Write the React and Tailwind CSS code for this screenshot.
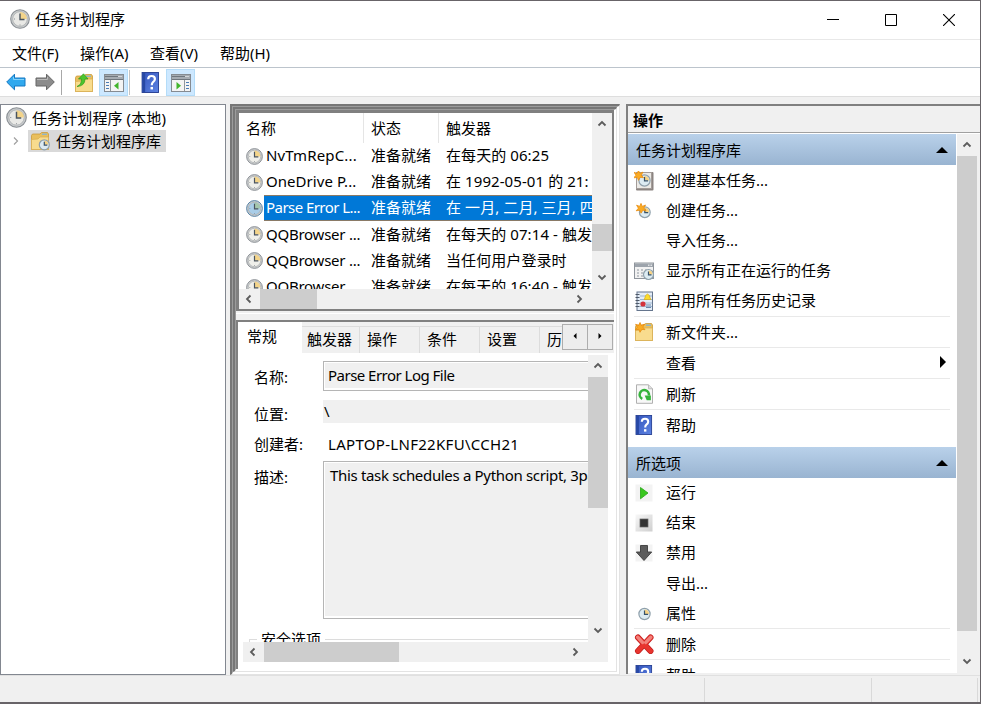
import React from "react";

const FONT = "font-['Noto_Sans','Noto_Sans_CJK_SC',sans-serif]";

function Clock({ size = 20, tint = "#e9e9e6", rim = "#8b9095", wedge = "#f3d48a", className = "" }) {
  return (
    <svg width={size} height={size} viewBox="0 0 20 20" className={"shrink-0 " + className}>
      <circle cx="10" cy="10" r="9.3" fill="#c9cccd" stroke={rim} strokeWidth="1.1" />
      <circle cx="10" cy="10" r="7.3" fill={tint} stroke="#a9adb0" strokeWidth="0.8" />
      <path d="M10 10V3a7 7 0 0 1 7 7z" fill={wedge} />
      <path d="M10 4.5V10.5H14.5" fill="none" stroke="#4a545e" strokeWidth="1.4" />
      <path d="M10 15.5v1M4 10h1" stroke="#8a8f94" strokeWidth="1" />
    </svg>
  );
}

function SmallClock({ x = 10, y = 10, r = 5.5 }) {
  return (
    <g>
      <circle cx={x} cy={y} r={r} fill="#dcebf2" stroke="#8fa0ab" strokeWidth="1.2" />
      <path d={`M${x} ${y}V${y - r + 1}A${r - 1} ${r - 1} 0 0 1 ${x + r - 1} ${y}z`} fill="#f6d284" />
      <path d={`M${x} ${y - r + 2}V${y + 0.4}H${x + r - 2}`} fill="none" stroke="#38536b" strokeWidth="1.2" />
    </g>
  );
}

function Star({ x = 5, y = 5 }) {
  return (
    <path
      transform={`translate(${x} ${y})`}
      d="M0 -5L1.3 -2L4.5 -3.4L2.8 -.4L5 2.2L1.8 1.8L0 4.8L-1.2 1.8L-4.8 2.4L-2.6 -.2L-4.4 -3.2L-1.3 -2z"
      fill="#fbab22"
      stroke="#e98d10"
      strokeWidth="0.8"
    />
  );
}

function FolderShape() {
  return (
    <g>
      <path d="M1.5 4.5L2.5 3H10l1.5-1.5h6L18.5 3v15.5h-17z" fill="#e9bf5d" stroke="#c99b3b" strokeWidth="0.8" />
      <path d="M12 3.2h5" stroke="#7db3df" strokeWidth="1.2" />
      <path d="M1.5 8.5L8 8l2-2h8.5v12.5h-17z" fill="#f8dc8e" stroke="#d9ae52" strokeWidth="0.7" />
    </g>
  );
}

function HelpBook({ size = 20 }) {
  return (
    <svg width={size} height={size} viewBox="0 0 20 20" className="shrink-0">
      <defs>
        <linearGradient id="hb" x1="0" y1="0" x2="1" y2="1">
          <stop offset="0" stopColor="#3455bd" />
          <stop offset="1" stopColor="#5d83e2" />
        </linearGradient>
      </defs>
      <rect x="2" y="0.5" width="15.6" height="19" fill="url(#hb)" stroke="#263f93" strokeWidth="0.9" />
      <rect x="2.3" y="1" width="2.6" height="18" fill="#2748a4" />
      <path d="M7.8 6.8Q7.8 3.8 11 3.8Q14.2 3.8 14.2 6.7Q14.2 8.4 12.4 9.6Q11.2 10.5 11.2 12.6" fill="none" stroke="#fff" strokeWidth="2.1" />
      <rect x="10" y="14.2" width="2.4" height="2.4" fill="#fff" />
    </svg>
  );
}

function PaneIcon({ flip }) {
  return (
    <svg width="20" height="18" viewBox="0 0 20 18" className="shrink-0">
      <rect x="0.5" y="0.5" width="19" height="17" fill="#f4f4f4" stroke="#858b92" />
      <rect x="1" y="1" width="18" height="4" fill="#a5abb2" />
      <path d="M1 2.5h13M1 5.5h18" stroke="#6f767e" />
      <path d="M14.5 2.5h1M16.5 2.5h1" stroke="#fff" />
      {flip ? (
        <g>
          <path d="M13.5 6v11" stroke="#8f969d" />
          <path d="M15 8.5h3M15 11.5h3M15 14.5h3" stroke="#4a7bb5" />
          <path d="M5.5 8l4.5 3.8L5.5 15.6z" fill="#42b52c" />
        </g>
      ) : (
        <g>
          <path d="M6.5 6v11" stroke="#8f969d" />
          <path d="M2 8.5h3M2 11.5h3M2 14.5h3" stroke="#4a7bb5" />
          <path d="M14.5 8l-4.5 3.8l4.5 3.8z" fill="#42b52c" />
        </g>
      )}
    </svg>
  );
}

function Arrow({ right }) {
  return (
    <svg width="20" height="18" viewBox="0 0 20 18" className="shrink-0">
      {right ? (
        <path d="M19.3 9L11.5 1.2V5H1v8h10.5v3.8z" fill="#8c8c8c" stroke="#666" strokeWidth="1" />
      ) : (
        <path d="M.7 9L8.5 1.2V5H19v8H8.5v3.8z" fill="#31a9ee" stroke="#1778c2" strokeWidth="1" />
      )}
      <path d={right ? "M2 6.5h10.5V4" : "M18 6.5H7.5V4"} fill="none" stroke={right ? "#b9b9b9" : "#83d2fb"} strokeWidth="1" />
    </svg>
  );
}

const CHEVRONS = { up: "M1.5 6.5L5 3L8.5 6.5", down: "M1.5 3.5L5 7L8.5 3.5", left: "M6.5 1.5L3 5L6.5 8.5", right: "M3.5 1.5L7 5L3.5 8.5" };
function Chevron({ dir }) {
  return (
    <svg width="10" height="10" viewBox="0 0 10 10" className="shrink-0">
      <path d={CHEVRONS[dir]} fill="none" stroke="#5c5c5c" strokeWidth="1.8" />
    </svg>
  );
}

function VScroll({ className = "", before, thumb }) {
  return (
    <div className={"flex w-5 shrink-0 flex-col items-center bg-[#f0f0f0] " + className}>
      <div className="flex h-[22px] shrink-0 items-center">
        <Chevron dir="up" />
      </div>
      <div className={"shrink-0 " + before} />
      <div className={"w-full shrink-0 bg-[#cdcdcd] " + thumb} />
      <div className="flex-1" />
      <div className="flex h-[23px] shrink-0 items-center pb-[1px]">
        <Chevron dir="down" />
      </div>
    </div>
  );
}

function HScroll({ className = "", thumb }) {
  return (
    <div className={"flex h-5 shrink-0 items-center bg-[#f0f0f0] " + className}>
      <div className="flex w-[21px] shrink-0 justify-center pr-0.5">
        <Chevron dir="left" />
      </div>
      <div className={"h-full shrink-0 bg-[#cdcdcd] " + thumb} />
      <div className="flex-1" />
      <div className="flex w-[26px] shrink-0 justify-center">
        <Chevron dir="right" />
      </div>
    </div>
  );
}

const tasks = [
  ["NvTmRepC...", "在每天的 06:25", "tracking-[0.15px]"],
  ["OneDrive P...", "在 1992-05-01 的 21:", "tracking-[0.05px]"],
  ["Parse Error L...", "在 一月, 二月, 三月, 四", "tracking-[-0.55px]"],
  ["QQBrowser ...", "在每天的 07:14 - 触发", "tracking-[-0.25px]"],
  ["QQBrowser ...", "当任何用户登录时", "tracking-[-0.25px]"],
  ["QQBrowser ...", "在每天的 16:40 - 触发", "tracking-[-0.25px]"],
];

function TaskList() {
  return (
    <div className="flex h-[201px] shrink-0 flex-col border-[3px] border-r-2 border-b-2 border-[#808080] bg-white">
      <div className="flex h-[176px] min-h-0">
        <div className="w-[353px] shrink-0 overflow-hidden whitespace-nowrap">
          <div className="flex h-[30px] items-center">
            <div className="flex h-full w-[125px] items-center border-r border-[#e5e5e5] pl-[7px]">名称</div>
            <div className="flex h-full w-[75px] items-center border-r border-[#e5e5e5] pl-[7px]">状态</div>
            <div className="pl-[7px]">触发器</div>
          </div>
          {tasks.map(([name, trigger, track], i) => {
            const on = i === 2;
            return (
              <div key={i} className="flex h-[26.2px] items-center pl-[7px]">
                <Clock size={17} tint={on ? "#a9cde8" : "#efefea"} rim={on ? "#4f7ea5" : "#8b9095"} wedge={on ? "#a5c7ad" : "#f3d48a"} />
                <div className={"ml-px flex h-[26px] flex-1 items-center " + (on ? "border-y border-[#8a7a66] bg-[#0078d7] text-white" : "")}>
                  <div className={"w-[107px] shrink-0 pb-[2px] pl-[2px] " + track}>{name}</div>
                  <div className="w-[75px] shrink-0 pb-[2px]">准备就绪</div>
                  <div className="pb-[2px] tracking-[0.08px]">{trigger}</div>
                </div>
              </div>
            );
          })}
        </div>
        <VScroll before="h-[89px]" thumb="h-[27px]" />
      </div>
      <HScroll className="pr-[20px]" thumb="w-[57px]" />
    </div>
  );
}

function Tab({ children, className }) {
  return <div className={"flex h-[27px] shrink-0 items-center self-end overflow-hidden border-t border-r border-[#dcdcdc] bg-[#f0f0f0] pb-[2px] whitespace-nowrap " + className}>{children}</div>;
}

function Details() {
  return (
    <div className="flex min-h-0 flex-1 flex-col border-t-2 border-l-2 border-[#808080] bg-white">
      <div className="flex h-[31px] shrink-0 bg-[#f0f0f0]">
        <div className="w-[64px] shrink-0 bg-white pt-[3px] pl-[9px]">常规</div>
        <Tab className="w-[58px] pl-[5px]">触发器</Tab>
        <Tab className="w-[60px] pl-[7px]">操作</Tab>
        <Tab className="w-[60px] pl-[7px]">条件</Tab>
        <Tab className="w-[60px] pl-[7px]">设置</Tab>
        <Tab className="w-[22px] border-r-0 pl-[7px]">历</Tab>
        <div className="mt-[2px] flex h-[26px] w-[51px] text-[8px]">
          <div className="flex flex-1 items-center justify-center border border-[#adadad] bg-[#ededed] pb-[2px]">
            <svg width="4" height="6"><path d="M3.5 0v6L.5 3z" /></svg>
          </div>
          <div className="flex flex-1 items-center justify-center border border-l-0 border-[#adadad] bg-[#ededed] pb-[2px]">
            <svg width="4" height="6"><path d="M.5 0v6L3.5 3z" /></svg>
          </div>
        </div>
      </div>
      <div className="flex h-[289px] shrink-0 overflow-hidden">
        <div className="flex w-[350px] shrink-0 flex-col overflow-hidden pt-[8px] pl-[16px] whitespace-nowrap">
          <div className="flex h-[30px] shrink-0">
            <div className="w-[69px] shrink-0 pt-[5px]">名称:</div>
            <div className="flex-1 border border-r-0 border-[#b5b5b5] bg-[#f0f0f0] pt-[2px] pl-[4px] tracking-[-0.52px] shadow-[inset_1px_1px_0_#fff,inset_0_-2px_0_#fff]">Parse Error Log File</div>
          </div>
          <div className="mt-[9px] flex h-[23px] shrink-0">
            <div className="w-[69px] shrink-0 pt-[3px]">位置:</div>
            <div className="flex-1 bg-[#f0f0f0] pl-px">\</div>
          </div>
          <div className="mt-[10px] flex h-[23px] shrink-0">
            <div className="w-[74px] shrink-0">创建者:</div>
            <div className="tracking-[0.3px]">LAPTOP-LNF22KFU\CCH21</div>
          </div>
          <div className="mt-[5px] flex h-[158px] shrink-0">
            <div className="w-[69px] shrink-0 pt-[5px]">描述:</div>
            <div className="flex-1 overflow-hidden border border-r-0 border-[#b5b5b5] bg-[#f0f0f0] pt-[2px] pl-[6px] tracking-[-0.33px] shadow-[inset_1px_1px_0_#fff,inset_0_-2px_0_#fff]">This task schedules a Python script, 3pa</div>
          </div>
          <div className="mt-[9px] -ml-[5px] flex h-[22px] shrink-0">
            <div className="mt-[11px] h-3 w-2 border-t border-l border-[#dcdcdc]" />
            <div className="px-[4px]">安全选项</div>
            <div className="mt-[11px] h-3 flex-1 border-t border-[#dcdcdc]" />
          </div>
        </div>
        <VScroll className="mt-[2px]" before="h-0" thumb="h-[131px]" />
      </div>
      <div className="pl-[5px]">
        <HScroll className="w-[365px] pr-[20px]" thumb="w-[135px]" />
      </div>
    </div>
  );
}

function Ic({ children }) {
  return (
    <svg width="20" height="20" viewBox="0 0 20 20" className="shrink-0">
      {children}
    </svg>
  );
}

const icons = {
  basic: (
    <Ic>
      <rect x="2" y="1" width="17.5" height="18.5" rx="1" fill="#8b8481" />
      <rect x="2.5" y="1.5" width="15" height="16" fill="#eceae6" stroke="#a39c98" />
      <SmallClock x={10.5} y={9.5} r={5.6} />
      <Star x={4.5} y={4.5} />
    </Ic>
  ),
  create: (
    <Ic>
      <SmallClock x={10.8} y={11.2} r={5.4} />
      <Star x={7} y={7.4} />
    </Ic>
  ),
  running: (
    <Ic>
      <rect x="0.5" y="2" width="19" height="15.5" fill="#f2f2f2" stroke="#8f959c" />
      <rect x="1" y="2.5" width="18" height="3.5" fill="#9da4ac" />
      <path d="M14 4.2h1.5M16.5 4.2H18" stroke="#fff" />
      <path d="M3 9h2M7 9h2M11 9h2M3 12h2M7 12h2M3 15h2M7 15h2" stroke="#8e969f" />
      <SmallClock x={14.5} y={13.5} r={5} />
    </Ic>
  ),
  history: (
    <Ic>
      <rect x="3" y="1" width="15.5" height="18.5" fill="#e4edf7" stroke="#65758d" />
      <path d="M6 5h12M6 8.5h12M6 12h12M6 15.5h12" stroke="#9db6d1" />
      <path d="M1.5 3.5h4M1.5 6.5h4M1.5 9.5h4M1.5 12.5h4M1.5 15.5h4" stroke="#4e5968" strokeWidth="1.2" />
      <path d="M13.5 3q2.6 1 2.6 4l.9 1.5h-7l.9-1.5q0-3 2.6-4z" fill="#fbdc2c" stroke="#d9ac18" strokeWidth="0.7" />
      <circle cx="9" cy="13" r="2.6" fill="#d3323b" />
      <path d="M12 14h5M12 16.5h5" stroke="#6a88ac" />
    </Ic>
  ),
  folder: (
    <Ic>
      <FolderShape />
      <Star x={6} y={5.5} />
    </Ic>
  ),
  refresh: (
    <Ic>
      <path d="M2.5.8h12l4 4v14.5h-16z" fill="#f8f8f8" stroke="#b0b0b0" />
      <path d="M14.5.8v4h4" fill="#ddd" stroke="#b0b0b0" strokeWidth="0.8" />
      <path d="M8.3 14.8A4.6 4.6 0 1 1 14.8 11.5" fill="none" stroke="#36b33c" strokeWidth="2.5" />
      <path d="M10.7 11.5h6.2v4.8h-4.2z" fill="#36b33c" />
    </Ic>
  ),
  help: <HelpBook />,
  run: (
    <Ic>
      <rect x="1.5" y="1.5" width="17" height="17" fill="#f3f3f3" />
      <path d="M6.5 4.5L14 10L6.5 15.8z" fill="#3ac71f" stroke="#25a713" strokeWidth="0.8" />
    </Ic>
  ),
  end: (
    <Ic>
      <defs>
        <linearGradient id="eg" x1="0" y1="0" x2="1" y2="1">
          <stop offset="0" stopColor="#f8f8f8" />
          <stop offset="1" stopColor="#cfcfcf" />
        </linearGradient>
      </defs>
      <rect x="1.5" y="1.5" width="17" height="17" fill="url(#eg)" />
      <rect x="6" y="6" width="8" height="8" fill="#333" stroke="#666" strokeWidth="0.7" />
    </Ic>
  ),
  disable: (
    <Ic>
      <rect x="1.5" y="1.5" width="17" height="17" fill="#f3f3f3" />
      <path d="M6.5 2.5h7V9h4.2L10 17.5L2.3 9h4.2z" fill="#5c5c5c" stroke="#3c3c3c" strokeWidth="0.9" />
    </Ic>
  ),
  props: (
    <Ic>
      <SmallClock x={10.5} y={11} r={5.6} />
    </Ic>
  ),
  del: (
    <Ic>
      <path d="M4 3.5L16.5 17M16.5 3.5L4 17" stroke="#c01d1d" strokeWidth="6" strokeLinecap="round" />
      <path d="M4 3.5L16.5 17M16.5 3.5L4 17" stroke="#e8352f" strokeWidth="4.6" strokeLinecap="round" />
      <path d="M3.6 3.2L8.5 8.4M16.8 3.2L11.8 8.4" stroke="#f2827c" strokeWidth="3.4" strokeLinecap="round" />
    </Ic>
  ),
};

function Item({ icon, children, arrow, lift }) {
  return (
    <div className="flex h-[30px] shrink-0 items-center pl-[6px]">
      <div className="w-[32px] shrink-0">{icon && icons[icon]}</div>
      <div className={"flex-1 " + (lift ? "pb-[2px]" : "")}>{children}</div>
      {arrow && (
        <svg width="6" height="12" className="mr-[10px] mb-[2px]">
          <path d="M0 0L6 6L0 12z" />
        </svg>
      )}
    </div>
  );
}
const Line = () => <div className="mr-[6px] ml-[6px] h-px shrink-0 bg-[#e9e9e9]" />;

function SectionHead({ children }) {
  return (
    <div className="flex h-[31px] shrink-0 items-center justify-between bg-linear-to-b from-[#b9d1ea] to-[#99b4d1] pr-[8px] pl-[8px]">
      <span>{children}</span>
      <svg width="12" height="6">
        <path d="M0 6L6 0L12 6z" />
      </svg>
    </div>
  );
}

function Actions() {
  return (
    <div className="flex h-[570px] w-[354px] shrink-0 flex-col border-t-2 border-l-2 border-[#808080] bg-[#f0f0f0]">
      <div className="flex h-[27px] shrink-0 items-center border-b border-[#a0a0a0] pt-[2px] pl-[5px] font-bold">操作</div>
      <div className="flex h-[540px] shrink-0 border-t border-white bg-white">
        <div className="flex w-[328px] shrink-0 flex-col overflow-hidden whitespace-nowrap">
          <SectionHead>任务计划程序库</SectionHead>
          <div className="h-px shrink-0" />
          <Item lift icon="basic">创建基本任务...</Item>
          <Item lift icon="create">创建任务...</Item>
          <Item lift>导入任务...</Item>
          <Item lift icon="running">显示所有正在运行的任务</Item>
          <Item lift icon="history">启用所有任务历史记录</Item>
          <Line />
          <Item icon="folder">新文件夹...</Item>
          <Line />
          <Item arrow>查看</Item>
          <Line />
          <Item icon="refresh">刷新</Item>
          <Line />
          <Item icon="help">帮助</Item>
          <div className="h-[7px] shrink-0" />
          <SectionHead>所选项</SectionHead>
          <Item lift icon="run">运行</Item>
          <Item lift icon="end">结束</Item>
          <Item lift icon="disable">禁用</Item>
          <Item icon="">导出...</Item>
          <Item icon="props">属性</Item>
          <Line />
          <Item icon="del">删除</Item>
          <Line />
          <Item icon="help">帮助</Item>
        </div>
        <VScroll className="ml-px" before="h-0" thumb="h-[475px]" />
        <div className="flex-1 bg-[#f0f0f0]" />
      </div>
    </div>
  );
}

export default function App() {
  return (
    <div className={"flex h-[704px] w-[981px] flex-col overflow-hidden border-t border-r border-b-2 border-[#686468] bg-[#f0f0f0] text-[15px] leading-[22px] text-black " + FONT}>
      <div className="flex h-[38px] shrink-0 items-center bg-white pl-[10px]">
        <Clock size={20} className="mb-[2px]" />
        <div className="ml-[5px] flex-1 pb-[2px]">任务计划程序</div>
        <div className="flex items-center gap-[46px] pr-[25px]">
          <svg width="12" height="12"><path d="M0 5.5h12" stroke="#000" /></svg>
          <svg width="12" height="12"><path d="M.5.5h11v11H.5z" fill="none" stroke="#000" /></svg>
          <svg width="12" height="12"><path d="M0 0l12 12M12 0L0 12" stroke="#000" strokeWidth="1.1" /></svg>
        </div>
      </div>
      <div className="flex h-[29px] shrink-0 items-center border-t border-b border-t-[#e8e8e8] border-b-[#bcc4cc] bg-white pb-[2px] pl-[12px]">
        <span className="w-[68px]">文件(F)</span>
        <span className="w-[70px]">操作(A)</span>
        <span className="w-[70px]">查看(V)</span>
        <span>帮助(H)</span>
      </div>
      <div className="flex h-[29px] shrink-0 items-center border-b border-[#dedede] bg-white pl-[6px]">
        <Arrow />
        <div className="w-[9px]" />
        <Arrow right />
        <div className="ml-[6px] h-[25px] w-px bg-[#a8a8a8]" />
        <svg width="20" height="20" viewBox="0 0 20 20" className="mt-[2px] ml-[12px]">
          <FolderShape />
          <path d="M3 13.5Q7.5 12 7.5 6H4.5L9.5.8L14 6H11Q11 13 3 13.5z" fill="#4cc52e" stroke="#2d9a1b" strokeWidth="0.7" />
        </svg>
        <div className="ml-[5px] flex h-[27px] w-[29px] items-center justify-center border border-[#b4dcf8] bg-[#cde8ff] pt-[2px]">
          <PaneIcon />
        </div>
        <div className="ml-px h-[25px] w-px bg-[#c4c4c4]" />
        <div className="ml-[10px]">
          <HelpBook size={21} />
        </div>
        <div className="ml-[5px] flex h-[27px] w-[29px] items-center justify-center border border-[#b4dcf8] bg-[#cde8ff] pt-[2px]">
          <PaneIcon flip />
        </div>
      </div>
      <div className="flex h-[578px] shrink-0 pt-[7px]">
        <div className="h-[571px] w-[226px] shrink-0 border border-[#828790] bg-white">
          <div className="flex h-[25px] items-center pl-[5px]">
            <Clock size={21} />
            <span className="ml-[5px] tracking-[0.1px]">任务计划程序 (本地)</span>
          </div>
          <div className="flex h-[21px] items-center pl-[11px]">
            <svg width="8" height="8" viewBox="0 0 8 8"><path d="M2 .5L5.5 4L2 7.5" fill="none" stroke="#a0a0a0" strokeWidth="1.2" /></svg>
            <div className="ml-[8px] flex h-[22px] w-[138px] items-center bg-[#d9d9d9] pl-[2px]">
              <svg width="20" height="20" viewBox="0 0 20 20">
                <FolderShape />
                <SmallClock x={14.3} y={13.8} r={5} />
              </svg>
              <span className="ml-[6px] whitespace-nowrap">任务计划程序库</span>
            </div>
          </div>
        </div>
        <div className="ml-[4px] flex h-[571px] w-[390px] shrink-0 border-t-2 border-r border-b border-l-2 border-t-[#777] border-r-[#e3e3e3] border-b-[#e3e3e3] border-l-[#777]">
          <div className="flex flex-1 border-t border-r-2 border-b-2 border-l border-t-[#9c9c9c] border-r-white border-b-white border-l-[#9c9c9c]">
            <div className="flex flex-1 border-t-2 border-r border-b border-l-2 border-t-[#777] border-r-[#e3e3e3] border-b-[#e3e3e3] border-l-[#777]">
              <div className="flex min-w-0 flex-1 flex-col border-t border-r-2 border-b-2 border-l border-t-[#9c9c9c] border-r-white border-b-white border-l-[#9c9c9c]">
                <TaskList />
                <div className="flex h-[9px] shrink-0 flex-col pt-[2px]">
                  <div className="h-px bg-white" />
                </div>
                <Details />
              </div>
            </div>
          </div>
        </div>
        <div className="ml-[6px]">
          <Actions />
        </div>
      </div>
      <div className="flex flex-1 border-t border-[#e0e0e0] pt-[2px]">
        <div className="w-[705px] border-r border-[#d9d9d9]" />
        <div className="w-[167px] border-r border-[#d9d9d9]" />
        <div className="w-[106px] border-r border-[#d9d9d9]" />
      </div>
    </div>
  );
}
